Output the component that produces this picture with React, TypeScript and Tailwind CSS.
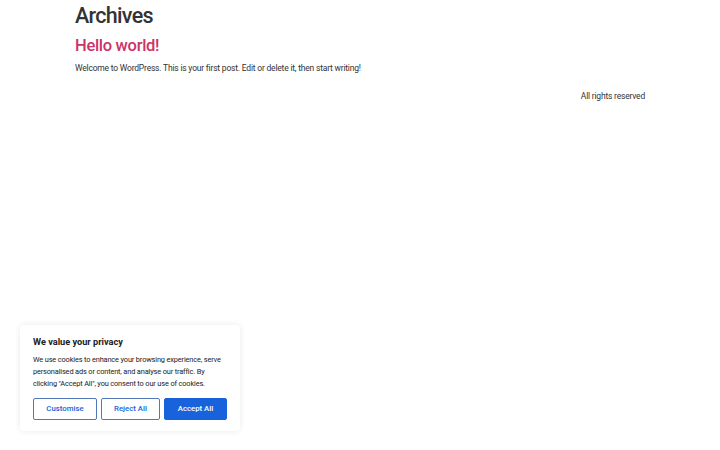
export default function App() {
  return (
    <div className="relative min-h-[450px] bg-white font-['Roboto',sans-serif] text-[#333]">
      <main className="mx-auto w-[570px] pt-[3px]">
        <h1 className="text-[21.5px] font-medium leading-[26px] tracking-[-0.7px] text-[#333]">Archives</h1>
        <article className="mt-[7px]">
          <h2 className="text-[16.5px] font-medium leading-[20px] tracking-[-0.3px] text-[#c36]">Hello world!</h2>
          <p className="mt-[6px] text-[8.5px] leading-[12px] tracking-[-0.2px] text-[#333]">
            Welcome to WordPress. This is your first post. Edit or delete it, then start writing!
          </p>
        </article>
        <footer className="mt-[16px] text-right text-[8.5px] leading-[12px] tracking-[-0.2px] text-[#333]">
          All rights reserved
        </footer>
      </main>

      {/* cookie consent */}
      <div className="absolute left-[20px] top-[325px] w-[220px] rounded-[4px] bg-white px-[13px] pb-[11px] pt-[11px] shadow-[0_0_6px_rgba(0,0,0,0.09)]">
        <p className="text-[9.2px] font-bold leading-[12px] text-[#212121]">We value your privacy</p>
        <p className="mt-[6px] pr-[4px] text-[7.4px] leading-[12px] tracking-[-0.15px] text-[#212121]">
          We use cookies to enhance your browsing experience, serve personalised ads or content, and analyse our traffic. By clicking "Accept All", you consent to our use of cookies.
        </p>
        <div className="mt-[8px] flex gap-[4px]">
          <button className="h-[22px] w-[64px] rounded-[2px] border-[1.5px] border-[#5278b8] text-[7.8px] font-medium text-[#1863dc]">
            Customise
          </button>
          <button className="h-[22px] w-[59px] rounded-[2px] border-[1.5px] border-[#5278b8] text-[7.8px] font-medium text-[#1863dc]">
            Reject All
          </button>
          <button className="h-[22px] w-[63px] rounded-[2px] border-[1.5px] border-[#1863dc] bg-[#1863dc] text-[7.8px] font-medium text-white">
            Accept All
          </button>
        </div>
      </div>
    </div>
  );
}
